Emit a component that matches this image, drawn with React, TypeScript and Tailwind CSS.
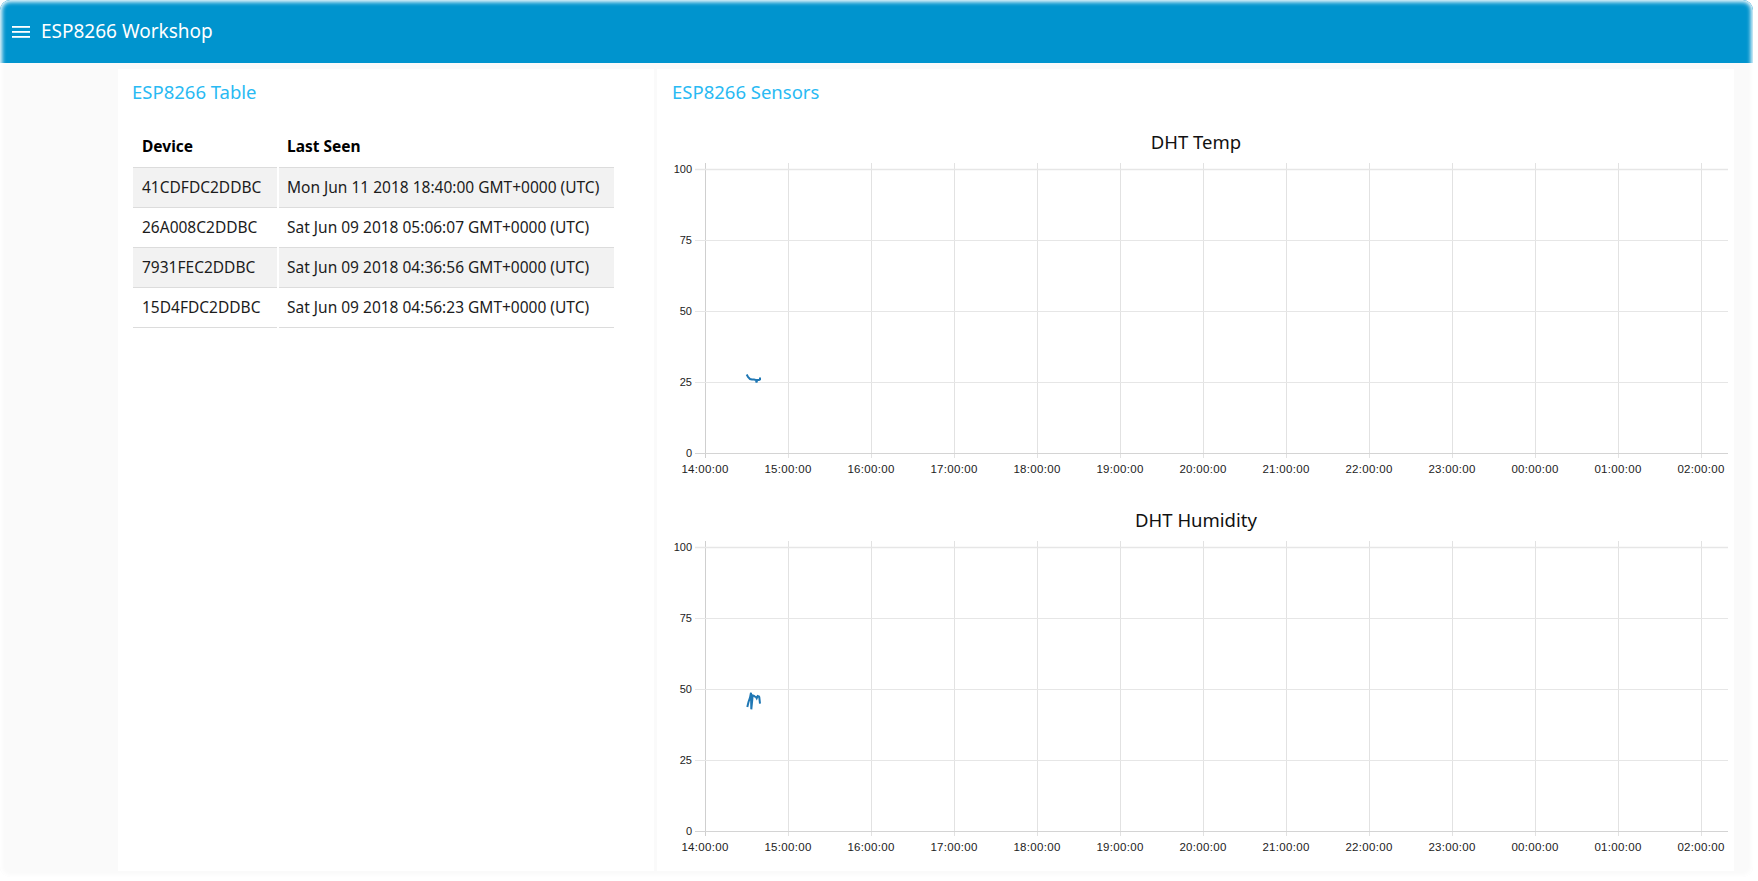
import React from "react";

const rows = [
  ["41CDFDC2DDBC", "Mon Jun 11 2018 18:40:00 GMT+0000 (UTC)"],
  ["26A008C2DDBC", "Sat Jun 09 2018 05:06:07 GMT+0000 (UTC)"],
  ["7931FEC2DDBC", "Sat Jun 09 2018 04:36:56 GMT+0000 (UTC)"],
  ["15D4FDC2DDBC", "Sat Jun 09 2018 04:56:23 GMT+0000 (UTC)"],
];

const xLabels = [
  "14:00:00", "15:00:00", "16:00:00", "17:00:00", "18:00:00", "19:00:00", "20:00:00",
  "21:00:00", "22:00:00", "23:00:00", "00:00:00", "01:00:00", "02:00:00",
];

function Chart({ title, points, top, titleY }: { title: string; points: string; top: number; titleY: number }) {
  const W = 1077;
  const yLines = [0, 1, 2, 3, 4].map((i) => top + i * 71);
  const yVals = ["100", "75", "50", "25", "0"];
  const bottom = top + 284;
  return (
    <svg width={W} height={377} className="block" style={{ fontFamily: '"Liberation Sans", Arial, sans-serif' }}>
      <text x={539} y={titleY} textAnchor="middle" fontSize="18.5" fill="#111" style={{ fontFamily: '"Noto Sans", sans-serif' }}>
        {title}
      </text>
      {xLabels.map((_, i) => (
        <line key={"v" + i} x1={48.5 + 83 * i} x2={48.5 + 83 * i} y1={top - 6} y2={bottom + 5} stroke={i === 0 ? "#cfcfcf" : "#e2e2e2"} strokeWidth="1" />
      ))}
      {yLines.map((y, i) => (
        <line key={"h" + i} x1={38} x2={1071} y1={y + 0.5} y2={y + 0.5} stroke={i === 4 ? "#d4d4d4" : "#e6e6e6"} strokeWidth={i === 0 ? 1.5 : 1} />
      ))}
      {yLines.map((y, i) => (
        <text key={"yl" + i} x={35} y={y + 4} textAnchor="end" fontSize="11" fill="#222">
          {yVals[i]}
        </text>
      ))}
      {xLabels.map((l, i) => (
        <text key={"xl" + i} x={48 + 83 * i} y={bottom + 20} textAnchor="middle" fontSize="11.5" fill="#222" letterSpacing="0.3">
          {l}
        </text>
      ))}
      <polyline points={points} fill="none" stroke="#1f77b4" strokeWidth="2" strokeLinejoin="miter" />
    </svg>
  );
}

export default function App() {
  return (
    <div className="w-[1758px] h-[881px] bg-white pr-[5px] pb-[4px]" style={{ fontFamily: '"Noto Sans", sans-serif' }}>
      <div className="relative h-full rounded-[10px] overflow-hidden bg-[#fafafa] flex flex-col">
        <header className="h-[63px] shrink-0 bg-[#0094ce] flex items-center pl-[12px]">
          <svg width="18" height="13" viewBox="0 0 18 13" className="mt-[2px]">
            <rect x="0" y="0" width="18" height="1.8" fill="#fff" />
            <rect x="0" y="5" width="18" height="1.8" fill="#fff" />
            <rect x="0" y="10" width="18" height="1.8" fill="#fff" />
          </svg>
          <span className="ml-[11px] text-[19px] text-white leading-none">ESP8266 Workshop</span>
        </header>
        <main className="flex-1 flex gap-[3px] pl-[118px] pt-[6px] pb-[7px]">
          <section className="w-[536px] bg-white pt-[11px] px-[14px]">
            <h2 className="text-[18.5px] leading-[24px] text-[#29baf3]">ESP8266 Table</h2>
            <div className="mt-[23px] ml-px w-[481px] text-[15.5px] text-[#1c1c1c]">
              <div className="flex gap-[2px] h-[40px] font-bold text-black">
                <div className="w-[144px] pl-[9px] flex items-center">Device</div>
                <div className="flex-1 pl-[8px] flex items-center">Last Seen</div>
              </div>
              {rows.map((r, i) => (
                <div key={i} className="flex gap-[2px] h-[40px]">
                  <div className={`w-[144px] pl-[9px] flex items-center border-t border-[#dcdcdc] ${i % 2 === 0 ? "bg-[#f2f2f2]" : "bg-white"}`}>{r[0]}</div>
                  <div className={`flex-1 pl-[8px] flex items-center border-t border-[#dcdcdc] ${i % 2 === 0 ? "bg-[#f2f2f2]" : "bg-white"}`}>{r[1]}</div>
                </div>
              ))}
              <div className="flex gap-[2px]">
                <div className="w-[144px] border-t border-[#dcdcdc]" />
                <div className="flex-1 border-t border-[#dcdcdc]" />
              </div>
            </div>
          </section>
          <section className="w-[1077px] bg-white pt-[11px]">
            <h2 className="pl-[15px] text-[18.5px] leading-[24px] text-[#29baf3]">ESP8266 Sensors</h2>
            <div className="mt-[13px]">
              <Chart
                title="DHT Temp"
                top={52}
                titleY={32}
                points="89.7,257.5 91,260 93,262 95,262.5 97,262.5 99,263 99.5,265.5 100.2,263 102,263 103,262.5 103,260.5"
              />
              <Chart
                title="DHT Humidity"
                top={53}
                titleY={33}
                points="90.3,213 91.5,208 93,203.7 94,198.7 94.3,215.3 95.7,201.3 97,201.8 98,202.7 99,203 99.7,204.3 100.7,202 102,202.5 102.3,203.3 103,209.7"
              />
            </div>
          </section>
        </main>
        <div className="pointer-events-none absolute inset-0 rounded-[10px] shadow-[inset_0_0_4px_2px_#ffffff]" />
      </div>
    </div>
  );
}
